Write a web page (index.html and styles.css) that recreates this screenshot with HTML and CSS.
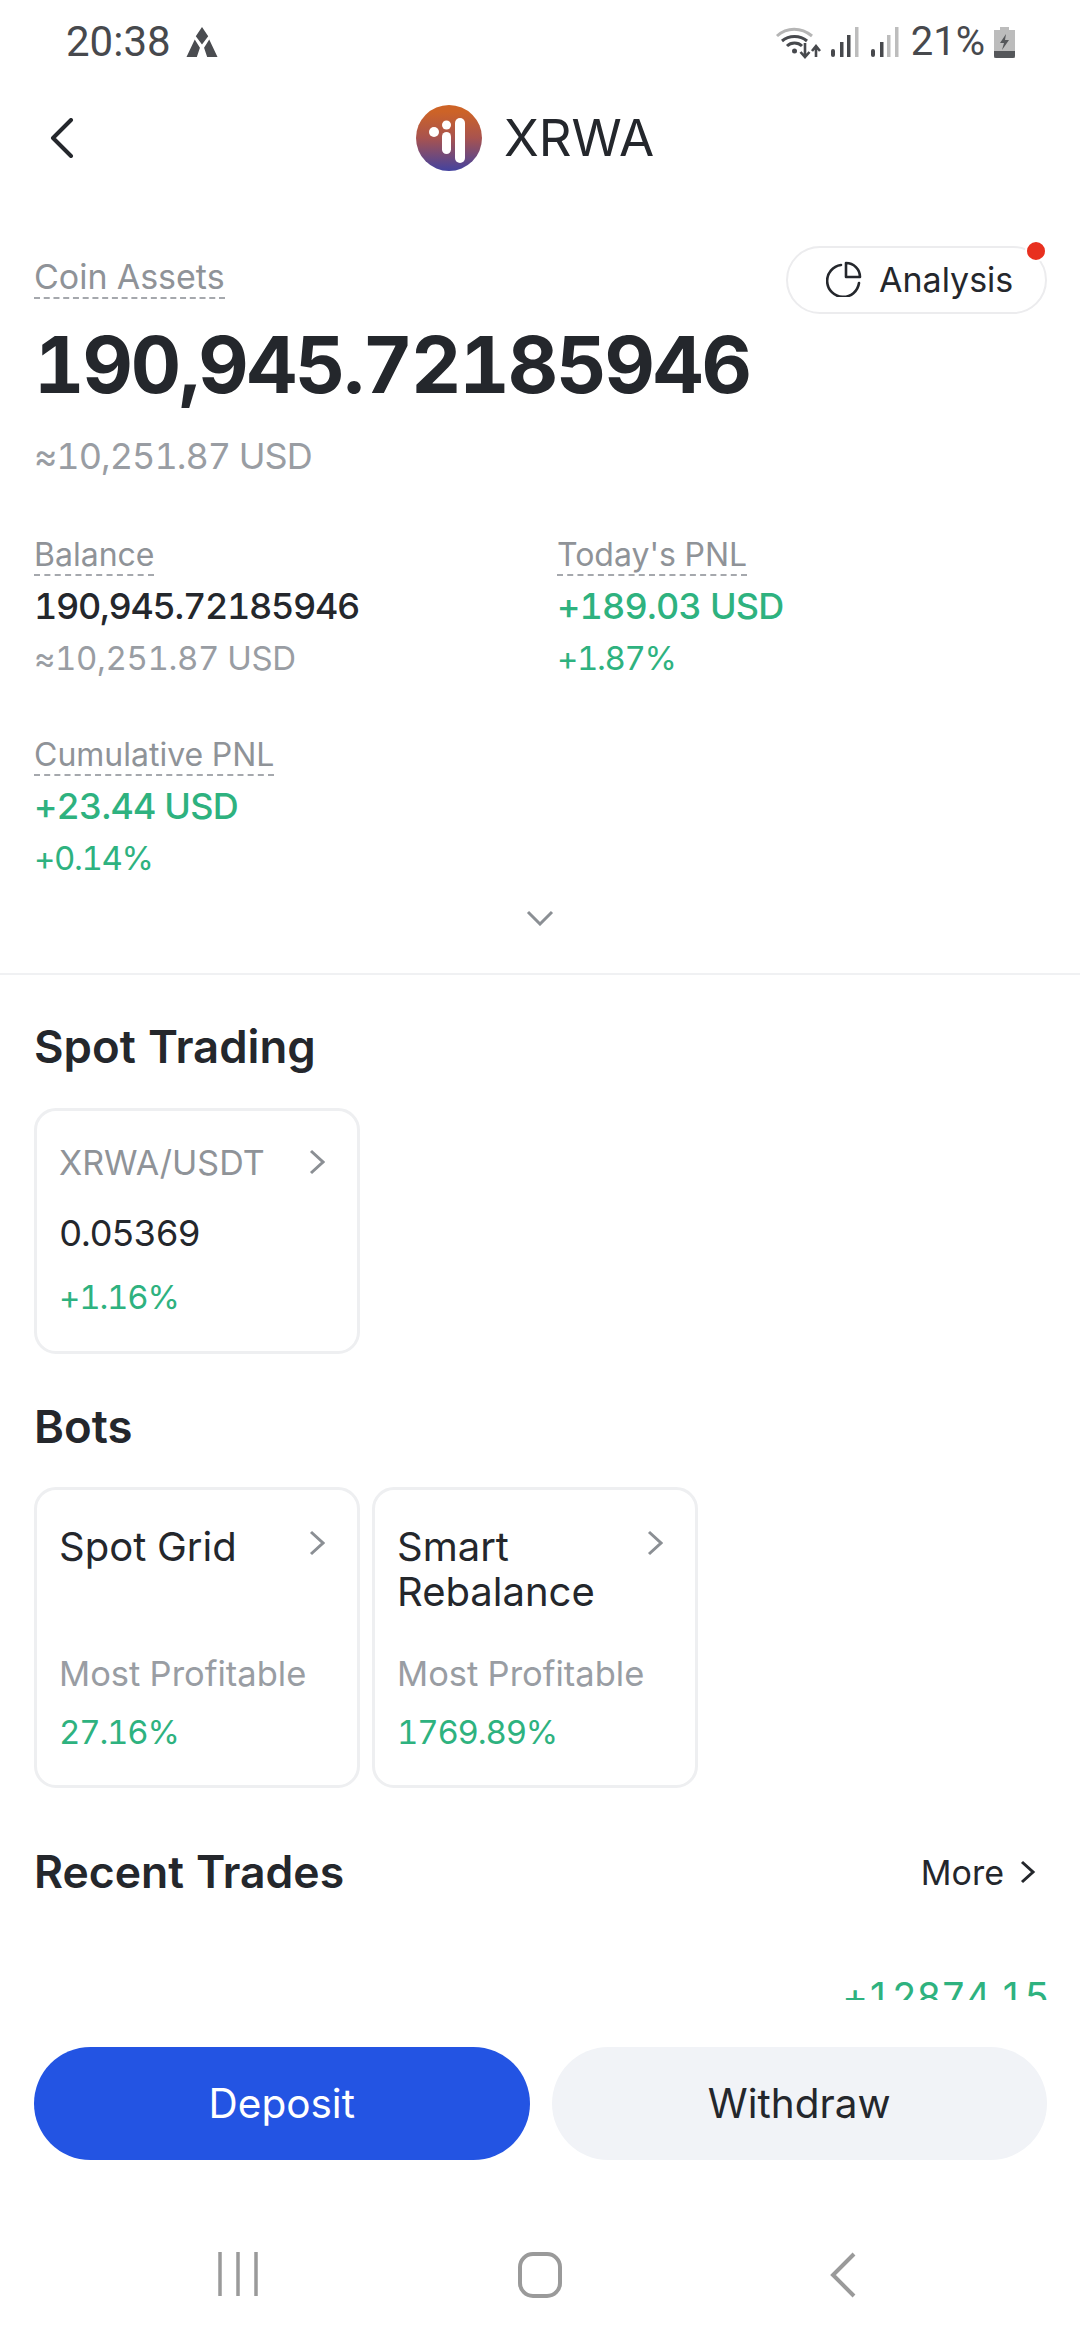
FILE: index.html
```html
<!DOCTYPE html>
<html lang="en">
<head>
<meta charset="utf-8">
<title>XRWA</title>
<link rel="stylesheet" href="styles.css">
</head>
<body>
<div class="phone">
  <div class="status">
    <div class="status-left">
      <span class="time">20:38</span>
      <svg class="st-tri" viewBox="0 0 30 30"><path d="M15 0 L21 9 L15 17 L9 9Z M8 12 L13 20 L10 29 L0 29Z M22 12 L30 29 L20 29 L17 20Z" fill="#4a4c50"/></svg>
    </div>
    <div class="status-right">
      <svg class="st-wifi" viewBox="0 0 46 33"><path d="M2 10 C12 1 26 1 37 10" fill="none" stroke="#b5b5b5" stroke-width="3"/><path d="M7 15 C14 9 25 9 32 15" fill="none" stroke="#47494d" stroke-width="3"/><path d="M12 20 C16 16 23 16 27 20" fill="none" stroke="#47494d" stroke-width="3"/><circle cx="19.500" cy="25" r="2.500" fill="#47494d"/><path d="M30 17 V30 M25.500 26 L30 31 L34.500 26 M41 31 V21 M37 25 L41 20 L45 25" fill="none" stroke="#47494d" stroke-width="2.600"/></svg>
      <svg class="st-sig" viewBox="0 0 28 30"><rect x="0" y="22" width="4" height="8" rx="2" fill="#47494d"/><rect x="9" y="15" width="3.500" height="15" fill="#47494d"/><rect x="16" y="8" width="3.500" height="22" fill="#47494d"/><rect x="24" y="0" width="3.500" height="30" fill="#bdbdbd"/></svg>
      <svg class="st-sig" viewBox="0 0 28 30"><rect x="0" y="22" width="4" height="8" rx="2" fill="#47494d"/><rect x="9" y="15" width="3.500" height="15" fill="#47494d"/><rect x="16" y="8" width="3.500" height="22" fill="#bdbdbd"/><rect x="24" y="0" width="3.500" height="30" fill="#bdbdbd"/></svg>
      <span class="pct">21%</span>
      <svg class="st-bat" viewBox="0 0 21 31"><path d="M6 0 H15 V3 H21 V31 H0 V3 H6Z" fill="#bcbcbc"/><path d="M0 24 H21 V29 Q21 31 19 31 H2 Q0 31 0 29Z" fill="#55575a"/><path d="M12 7 L6 16 H10 L8 23 L15 13 H11Z" fill="#55575a"/></svg>
    </div>
  </div>

  <header class="nav">
    <svg class="nav-back" viewBox="0 0 24 40"><path d="M21 2 L3 20 L21 38" fill="none" stroke="#24272c" stroke-width="4" stroke-linecap="round" stroke-linejoin="round"/></svg>
    <div class="nav-title">
      <svg class="logo" viewBox="0 0 66 66">
        <defs><linearGradient id="lg" x1="0" y1="0" x2="0" y2="1"><stop offset="0.1" stop-color="#cd6327"/><stop offset="0.5" stop-color="#a8534f"/><stop offset="1" stop-color="#43429f"/></linearGradient></defs>
        <circle cx="33" cy="33" r="33" fill="url(#lg)"/>
        <circle cx="18" cy="27" r="5" fill="#fff"/>
        <circle cx="30.500" cy="20" r="4.500" fill="#fff"/>
        <rect x="26" y="27" width="9" height="22" rx="4.500" fill="#fff"/>
        <rect x="39" y="13" width="10" height="45" rx="5" fill="#fff"/>
      </svg>
      <span class="coin">XRWA</span>
    </div>
  </header>

  <main class="scroll">
    <section class="assets">
      <div class="assets-head">
        <span class="label label-lg">Coin Assets</span>
        <div class="pill">
          <svg class="pill-icon" viewBox="0 0 36 36"><path d="M15 4 A16 16 0 1 0 33 22" fill="none" stroke="#24272c" stroke-width="2.600" stroke-linecap="round"/><path d="M20 2 A14 14 0 0 1 34 16 H20Z" fill="none" stroke="#24272c" stroke-width="2.600" stroke-linejoin="round"/></svg>
          <span>Analysis</span>
          <i class="dot"></i>
        </div>
      </div>
      <div class="big">190,945.72185946</div>
      <div class="approx">≈10,251.87 USD</div>

      <div class="stats">
        <div class="stat">
          <span class="label">Balance</span>
          <div class="val">190,945.72185946</div>
          <div class="sub">≈10,251.87 USD</div>
        </div>
        <div class="stat">
          <span class="label">Today's PNL</span>
          <div class="val up">+189.03 USD</div>
          <div class="sub up">+1.87%</div>
        </div>
        <div class="stat">
          <span class="label">Cumulative PNL</span>
          <div class="val up">+23.44 USD</div>
          <div class="sub up">+0.14%</div>
        </div>
      </div>
      <div class="expand">
        <svg class="chev-down" viewBox="0 0 28 16"><path d="M2 2 L14 14 L26 2" fill="none" stroke="#8b8f94" stroke-width="3"/></svg>
      </div>
    </section>

    <section class="block">
      <h2>Spot Trading</h2>
      <div class="cards">
        <div class="card card-spot">
          <div class="card-top">
            <span class="pair">XRWA/USDT</span>
            <svg class="chev" viewBox="0 0 16 26"><path d="M2 2 L14 13 L2 24" fill="none" stroke="#8b8f94" stroke-width="3"/></svg>
          </div>
          <div class="price">0.05369</div>
          <div class="chg up">+1.16%</div>
        </div>
      </div>
    </section>

    <section class="block block-bots">
      <h2>Bots</h2>
      <div class="cards">
        <div class="card card-bot">
          <div class="card-top">
            <span class="bot-name">Spot Grid</span>
            <svg class="chev" viewBox="0 0 16 26"><path d="M2 2 L14 13 L2 24" fill="none" stroke="#8b8f94" stroke-width="3"/></svg>
          </div>
          <div class="bot-foot">
            <div class="bot-label">Most Profitable</div>
            <div class="chg up">27.16%</div>
          </div>
        </div>
        <div class="card card-bot">
          <div class="card-top">
            <span class="bot-name">Smart Rebalance</span>
            <svg class="chev" viewBox="0 0 16 26"><path d="M2 2 L14 13 L2 24" fill="none" stroke="#8b8f94" stroke-width="3"/></svg>
          </div>
          <div class="bot-foot">
            <div class="bot-label">Most Profitable</div>
            <div class="chg up">1769.89%</div>
          </div>
        </div>
      </div>
    </section>

    <section class="block block-trades">
      <div class="trades-head">
        <h2>Recent Trades</h2>
        <div class="more">
          <span>More</span>
          <svg class="chev-more" viewBox="0 0 16 24"><path d="M2 2 L13 12 L2 22" fill="none" stroke="#24272c" stroke-width="3"/></svg>
        </div>
      </div>
      <div class="trade-amt up">+12874.15</div>
    </section>
  </main>

  <div class="actions">
    <div class="btn btn-primary">Deposit</div>
    <div class="btn btn-muted">Withdraw</div>
  </div>

  <div class="sysnav">
    <svg class="sys-recent" viewBox="0 0 40 44"><path d="M2 0 V44 M20 0 V44 M38 0 V44" fill="none" stroke="#9a9a9a" stroke-width="3.500"/></svg>
    <svg class="sys-home" viewBox="0 0 44 46"><rect x="2" y="2" width="40" height="42" rx="13" fill="none" stroke="#9a9a9a" stroke-width="4"/></svg>
    <svg class="sys-back" viewBox="0 0 26 46"><path d="M24 2 L3 23 L24 44" fill="none" stroke="#9a9a9a" stroke-width="4"/></svg>
  </div>
</div>
</body>
</html>
```

FILE: styles.css
```css
* { box-sizing: border-box; }
html, body { margin: 0; padding: 0; background: #fff; }
body { font-family: "Inter", "Liberation Sans", sans-serif; color: #24272c; font-variant-numeric: tabular-nums; }
.phone { width: 1080px; height: 2340px; display: flex; flex-direction: column; overflow: hidden; background: #fff; }

.status { height: 84px; flex: none; display: flex; justify-content: space-between; align-items: flex-start; padding: 26px 65px 0 66px; font-family: "Roboto", sans-serif; color: #47494d; }
.status-left, .status-right { display: flex; align-items: center; height: 32px; }
.time { font-size: 42px; line-height: 32px; }
.st-tri { width: 32px; height: 31px; margin-left: 15px; }
.st-wifi { width: 46px; height: 33px; }
.st-sig { width: 28px; height: 30px; margin-left: 10px; }
.st-sig + .st-sig { margin-left: 12px; }
.pct { font-size: 40px; line-height: 32px; margin-left: 12px; }
.st-bat { width: 21px; height: 31px; margin-left: 9px; }

.nav { height: 108px; flex: none; display: flex; align-items: center; justify-content: center; position: relative; }
.nav-back { position: absolute; left: 50px; top: 34px; width: 24px; height: 40px; }
.nav-title { display: flex; align-items: center; gap: 22px; margin-right: 10px; }
.logo { width: 66px; height: 66px; }
.coin { font-size: 51px; line-height: 60px; }

.scroll { flex: none; height: 1808px; overflow: hidden; }
.assets { padding: 54px 34px 0; border-bottom: 2px solid #f0f1f3; height: 783px; }
.assets-head { display: flex; justify-content: space-between; align-items: flex-start; height: 68px; }
.label { display: inline-block; color: #8f9398; font-size: 32px; line-height: 34px; border-bottom: 2px dashed #a5a8ad; padding-bottom: 2px; }
.label-lg { font-size: 34px; line-height: 40px; margin-top: 11px; padding-bottom: 0; }
.pill { position: relative; display: flex; align-items: center; gap: 17px; width: 261px; height: 68px; margin-right: -1px; border: 2px solid #ececee; border-radius: 34px; padding: 0 0 2px 38px; font-size: 34px; }
.pill-icon { width: 36px; height: 36px; }
.dot { position: absolute; right: -2px; top: -8px; width: 22px; height: 22px; border-radius: 50%; background: #e8301f; border: 2px solid #fff; }
.big { font-size: 78px; letter-spacing: -2px; line-height: 90px; font-weight: 700; margin-top: 6px; }
.approx { font-size: 36px; letter-spacing: -1px; line-height: 44px; color: #999da3; margin-top: 24px; }

.stats { display: grid; grid-template-columns: 523px 1fr; row-gap: 54px; margin-top: 60px; }
.stat { display: flex; flex-direction: column; align-items: flex-start; }
.val { font-size: 36px; letter-spacing: -1.3px; line-height: 52px; margin-top: 4px; font-weight: 500; }
.val.up { letter-spacing: -0.8px; }
.sub { font-size: 33px; letter-spacing: -0.4px; line-height: 52px; color: #999da3; }
.sub.up { letter-spacing: -1.4px; }
.up { color: #2eb27f; }
.expand { display: flex; justify-content: center; margin-top: 26px; }
.chev-down { width: 28px; height: 16px; }

.block { padding: 0 34px; }
.block h2 { margin: 0; font-size: 45.5px; line-height: 56px; font-weight: 600; }
.trades-head h2 { font-size: 44.5px; }
.assets + .block { padding-top: 44px; }
.cards { display: flex; gap: 12px; margin-top: 33px; }
.card { width: 326px; border: 3px solid #eeeff1; border-radius: 22px; padding: 0 22px; }
.card-spot { height: 246px; padding-top: 32px; }
.card-bot { height: 301px; padding-top: 34px; display: flex; flex-direction: column; justify-content: space-between; padding-bottom: 31px; }
.card-top { display: flex; justify-content: space-between; align-items: flex-start; }
.chev { width: 16px; height: 26px; flex: none; margin-top: 6px; margin-right: 10px; }
.pair { font-size: 34px; line-height: 40px; color: #8f9398; }
.price { font-size: 36px; letter-spacing: -1.3px; line-height: 44px; margin-top: 28px; }
.chg { font-size: 33px; letter-spacing: -1.2px; line-height: 44px; margin-top: 20px; }
.block-bots { margin-top: 45px; }
.block-bots .cards { margin-top: 32px; }
.bot-name { font-size: 40px; line-height: 45px; width: 220px; }
.bot-label { font-size: 34.5px; line-height: 44px; color: #999da3; }
.bot-foot .chg { margin-top: 14px; }
.block-trades { margin-top: 56px; height: 200px; }
.trades-head { display: flex; justify-content: space-between; align-items: center; }
.more { display: flex; align-items: center; gap: 16px; font-size: 34px; margin-right: 10px; }
.chev-more { width: 16px; height: 24px; }
.trade-amt { text-align: right; font-size: 39px; letter-spacing: -0.7px; line-height: 44px; margin-top: 75px; margin-right: -3px; }

.actions { flex: none; height: 200px; display: flex; gap: 22px; padding: 47px 33px 0 34px; }
.btn { flex: 1; height: 113px; border-radius: 57px; display: flex; align-items: center; justify-content: center; font-size: 40.5px; }
.btn-primary { background: #2354e3; color: #fff; }
.btn-muted { background: #f1f3f7; color: #24272c; }

.sysnav { flex: none; position: relative; height: 140px; }
.sysnav svg { position: absolute; top: 52px; }
.sys-recent { left: 218px; width: 40px; height: 44px; }
.sys-home { left: 518px; width: 44px; height: 46px; }
.sys-back { left: 830px; width: 26px; height: 46px; }
```
